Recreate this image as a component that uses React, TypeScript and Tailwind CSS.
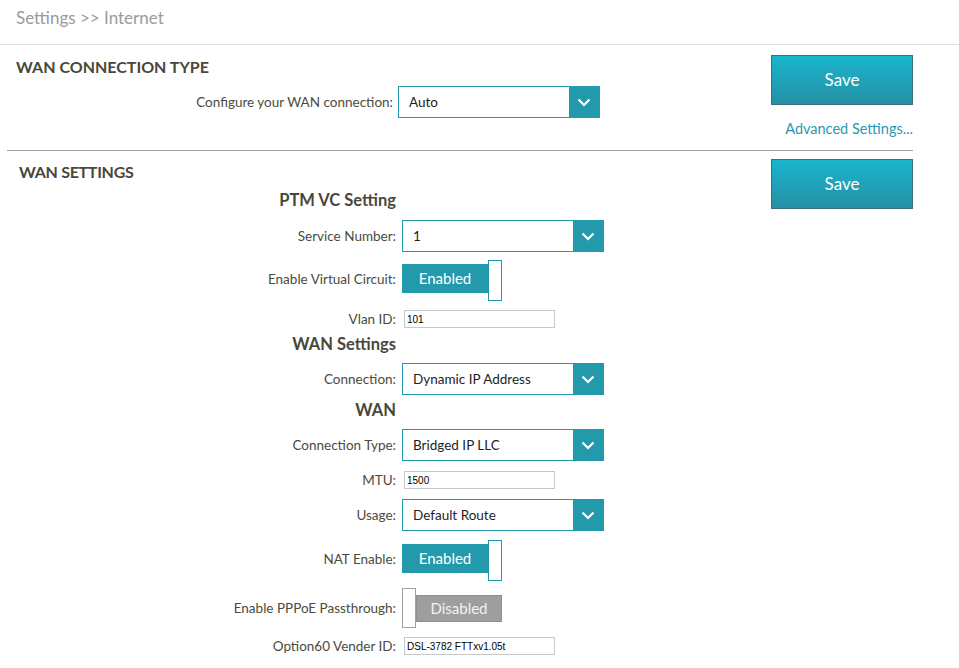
import React from 'react';

const font = 'font-["Lato","Open_Sans",sans-serif]';

const Chevron: React.FC = () => (
    <svg width="14" height="9" viewBox="0 0 14 9" fill="none">
        <path d="M1.5 1.5L7 7L12.5 1.5" stroke="#ffffff" strokeWidth="2.2" />
    </svg>
);

const Select: React.FC<{ value: string }> = ({ value }) => (
    <div className="flex h-[32px] w-[202px] items-stretch border border-[#2399ac] bg-white">
        <div className="flex flex-1 items-center pl-[10px] text-[13.5px] text-[#1e1e1e]">{value}</div>
        <div className="flex w-[30px] items-center justify-center bg-[#2399ac]">
            <Chevron />
        </div>
    </div>
);

const TextInput: React.FC<{ value: string }> = ({ value }) => (
    <div className='ml-[2px] flex h-[18px] w-[151px] items-center border border-[#c8c8c8] bg-white pl-[2px] font-["Liberation_Sans",sans-serif] text-[10px] text-black'>
        {value}
    </div>
);

// enabled: teal bar with the knob on the right, hanging a bit above and below
const Toggle: React.FC<{ on: boolean }> = ({ on }) =>
    on ? (
        <div className="flex items-start">
            <div className="flex h-[29px] w-[86px] items-center justify-center bg-[#2399ac] text-[15px] text-white">
                Enabled
            </div>
            <div className="mb-[-8px] mt-[-4px] h-[41px] w-[14px] border border-[#2399ac] bg-white" />
        </div>
    ) : (
        <div className="flex h-[40px] items-center">
            <div className="h-[40px] w-[14px] border border-[#a0a0a0] bg-white" />
            <div className="flex h-[27px] w-[86px] items-center justify-center border border-[#8e8e8e] bg-[#9e9e9e] text-[15px] text-[#f2f2f2]">
                Disabled
            </div>
        </div>
    );

const Row: React.FC<{ label: string; className?: string; children: React.ReactNode }> = ({ label, className, children }) => (
    <div className={`flex items-center ${className ?? ''}`}>
        <div className="w-[402px] pr-[6px] text-right text-[13.5px] leading-[16px] text-[#4b4b3c]">{label}</div>
        {children}
    </div>
);

const Heading: React.FC<{ text: string; className?: string }> = ({ text, className }) => (
    <div className={`w-[396px] text-right text-[16.5px] leading-[20px] font-bold text-[#48483a] ${className ?? ''}`}>
        {text}
    </div>
);

const SaveButton: React.FC = () => (
    <button className="h-[50px] w-[142px] border border-[#3d6f79] bg-gradient-to-b from-[#17b5cd] to-[#2490a5] text-[17px] text-white">
        Save
    </button>
);

const App: React.FC = () => {
    return (
        <div className={`h-[668px] w-[959px] overflow-hidden bg-white ${font}`}>
            {/* breadcrumb */}
            <div className="h-[45px] border-b border-[#dedede] pl-4 pt-[8px] text-[17px] leading-[20px] text-[#9b9b9b]">
                Settings &gt;&gt; Internet
            </div>

            {/* WAN connection type */}
            <div className="flex h-[105px]">
                <div className="flex-1">
                    <div className="ml-4 mt-[12px] text-[16px] leading-[20px] font-bold text-[#48483a]">
                        WAN CONNECTION TYPE
                    </div>
                    <div className="mt-[9px] flex items-center">
                        <div className="w-[398px] pr-[5px] text-right text-[13.5px] leading-[16px] text-[#4b4b3c]">
                            Configure your WAN connection:
                        </div>
                        <Select value="Auto" />
                    </div>
                </div>
                <div className="mr-[46px] flex w-[142px] flex-col items-end pt-[10px]">
                    <SaveButton />
                    <a className="mt-[16px] text-[14.5px] leading-[16px] text-[#2a98b0]">Advanced Settings...</a>
                </div>
            </div>
            <div className="ml-[7px] mr-[46px] border-t border-[#a3a3a3]" />

            {/* WAN settings */}
            <div className="flex">
                <div className="flex-1">
                    <div className="ml-[19px] mt-[11px] text-[16px] leading-[20px] font-bold tracking-[-0.3px] text-[#48483a]">
                        WAN SETTINGS
                    </div>
                    <Heading text="PTM VC Setting" className="mt-[8px]" />
                    <Row label="Service Number:" className="mt-[10px]">
                        <Select value="1" />
                    </Row>
                    <Row label="Enable Virtual Circuit:" className="mt-[12px]">
                        <Toggle on />
                    </Row>
                    <Row label="Vlan ID:" className="mt-[17px]">
                        <TextInput value="101" />
                    </Row>
                    <Heading text="WAN Settings" className="mt-[6px]" />
                    <Row label="Connection:" className="mt-[9px]">
                        <Select value="Dynamic IP Address" />
                    </Row>
                    <Heading text="WAN" className="mt-[5px]" />
                    <Row label="Connection Type:" className="mt-[9px]">
                        <Select value="Bridged IP LLC" />
                    </Row>
                    <Row label="MTU:" className="mt-[10px]">
                        <TextInput value="1500" />
                    </Row>
                    <Row label="Usage:" className="mt-[10px]">
                        <Select value="Default Route" />
                    </Row>
                    <Row label="NAT Enable:" className="mt-[13px]">
                        <Toggle on />
                    </Row>
                    <Row label="Enable PPPoE Passthrough:" className="mt-[15px]">
                        <Toggle on={false} />
                    </Row>
                    <Row label="Option60 Vender ID:" className="mt-[9px]">
                        <TextInput value="DSL-3782 FTTxv1.05t" />
                    </Row>
                </div>
                <div className="mr-[46px] w-[142px] pt-[8px]">
                    <SaveButton />
                </div>
            </div>
        </div>
    );
};

export default App;
